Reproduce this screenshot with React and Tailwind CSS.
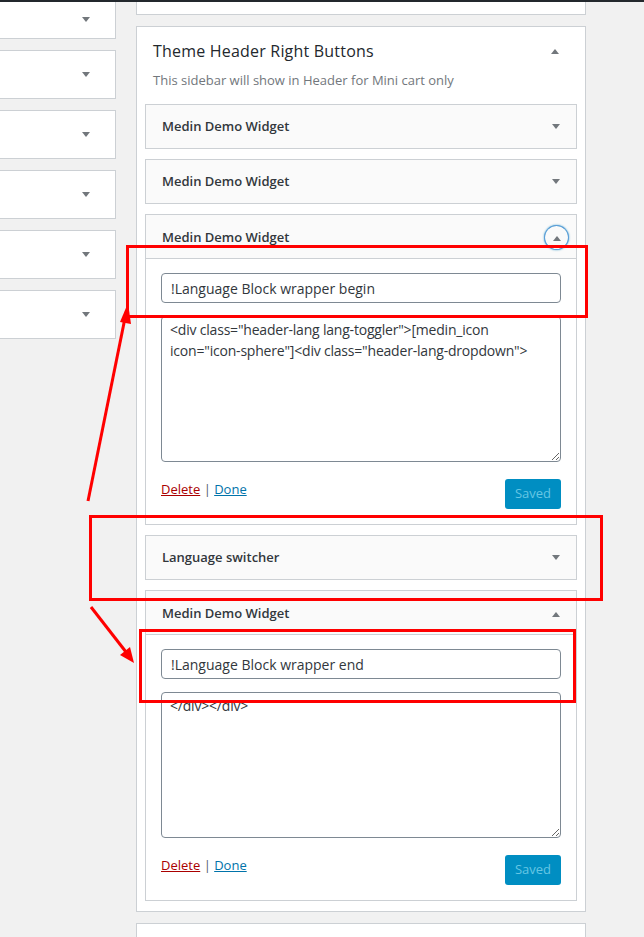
const font = { fontFamily: '"Open Sans", "Noto Sans", sans-serif' };

const Tri = ({ up }) => (
  <svg width="10" height="6" viewBox="0 0 10 6" className="shrink-0">
    <polygon points={up ? '1,6 9,6 5,1' : '1,0 9,0 5,5'} fill="#72777c" />
  </svg>
);

const LeftBox = ({ first }) => (
  <div
    className={`flex items-center justify-end border border-l-0 border-[#ccd0d4] bg-white pr-[24px] ${
      first ? 'h-[37px] border-t-0' : 'mt-[11px] h-[49px]'
    }`}
  >
    <Tri />
  </div>
);

const WidgetHead = ({ title, up, focus, open }) => (
  <div
    className={`flex items-center justify-between bg-[#fafafa] pl-4 pr-[15px] ${
      open ? 'h-[44px] border-b border-[#ccd0d4] pt-[2px]' : 'h-[43px] pt-px'
    }`}
  >
    <span className="text-[13px] font-semibold text-[#32373c]">{title}</span>
    {focus ? (
      <span className="-mr-[7px] flex h-[23px] w-[23px] items-center justify-center rounded-full shadow-[0_0_0_1px_#5b9dd9,0_0_2px_1px_rgba(30,140,190,0.8)]">
        <Tri up />
      </span>
    ) : (
      <Tri up={up} />
    )}
  </div>
);

const WidgetBody = ({ title, code }) => (
  <div className="bg-white px-[15px] pt-[14px] pb-[15px]">
    <input
      readOnly
      value={title}
      className="h-[30px] w-full rounded-[4px] border border-[#7e8993] px-[9px] text-[14px] text-[#32373c] outline-none"
      style={font}
    />
    <textarea
      readOnly
      value={code}
      className="mt-[13px] block h-[146px] w-full rounded-[4px] border border-[#7e8993] px-[8px] py-[2px] text-[14px] leading-[21px] tracking-[-0.2px] text-[#32373c] outline-none"
      style={font}
    />
    <div className="mt-[17px] flex h-[30px] items-start justify-between">
      <div className="pt-px text-[13px] leading-[18px] text-[#555d66]">
        <span className="text-[#a00] underline">Delete</span> | <span className="text-[#0073aa] underline">Done</span>
      </div>
      <button className="h-[30px] w-[56px] rounded-[3px] bg-[#008ec2] text-[13px] text-[#66c6e4]">Saved</button>
    </div>
  </div>
);

const Widget = ({ children, className = '' }) => (
  <div className={`border border-[#ccd0d4] ${className}`}>{children}</div>
);

export default function App() {
  return (
    <div className="relative h-[937px] w-[644px] overflow-hidden bg-[#f1f1f1]" style={font}>
      <div className="h-[2px] bg-[#23282d]" />
      <div className="flex gap-[20px]">
        <div className="w-[116px] shrink-0">
          <LeftBox first />
          <LeftBox />
          <LeftBox />
          <LeftBox />
          <LeftBox />
          <LeftBox />
        </div>

        <div className="w-[450px] shrink-0">
          <div className="h-[13px] border border-t-0 border-[#ccd0d4] bg-white" />

          <div className="mt-[11px] border border-[#ccd0d4] bg-white px-[8px] pb-[10px]">
            <div className="flex items-center justify-between pl-[8px] pr-[17px] pt-[12px]">
              <h2 className="text-[16px] leading-[24px] font-medium tracking-[0.2px] text-[#23282d]">Theme Header Right Buttons</h2>
              <Tri up />
            </div>
            <p className="mt-[8px] pl-[8px] text-[13px] leading-[18px] text-[#72777c]">
              This sidebar will show in Header for Mini cart only
            </p>

            <div className="mt-[15px] flex flex-col gap-[10px]">
              <Widget>
                <WidgetHead title="Medin Demo Widget" />
              </Widget>
              <Widget>
                <WidgetHead title="Medin Demo Widget" />
              </Widget>
              <Widget>
                <WidgetHead title="Medin Demo Widget" focus open />
                <WidgetBody
                  title="!Language Block wrapper begin"
                  code={'<div class="header-lang lang-toggler">[medin_icon icon="icon-sphere"]<div class="header-lang-dropdown">'}
                />
              </Widget>
              <Widget>
                <WidgetHead title="Language switcher" />
              </Widget>
              <Widget>
                <WidgetHead title="Medin Demo Widget" up open />
                <WidgetBody title="!Language Block wrapper end" code={'</div></div>'} />
              </Widget>
            </div>
          </div>

          <div className="mt-[11px] h-[40px] border border-[#ccd0d4] bg-white" />
        </div>
      </div>

      {/* annotation overlay */}
      <div className="absolute left-[126px] top-[245px] h-[73px] w-[462px] border-[3px] border-[#ff0000]" />
      <div className="absolute left-[89px] top-[515px] h-[86px] w-[514px] border-[3px] border-[#ff0000]" />
      <div className="absolute left-[139px] top-[629px] h-[74px] w-[437px] border-[3px] border-[#ff0000]" />
      <svg className="absolute left-0 top-0" width="644" height="937">
        <line x1="88" y1="501" x2="125" y2="318" stroke="#ff0000" strokeWidth="3" />
        <polygon points="128,303 120,322 131,324" fill="#ff0000" />
        <line x1="91" y1="607" x2="126" y2="652" stroke="#ff0000" strokeWidth="3" />
        <polygon points="134,663 120,655 130,647" fill="#ff0000" />
      </svg>
    </div>
  );
}
